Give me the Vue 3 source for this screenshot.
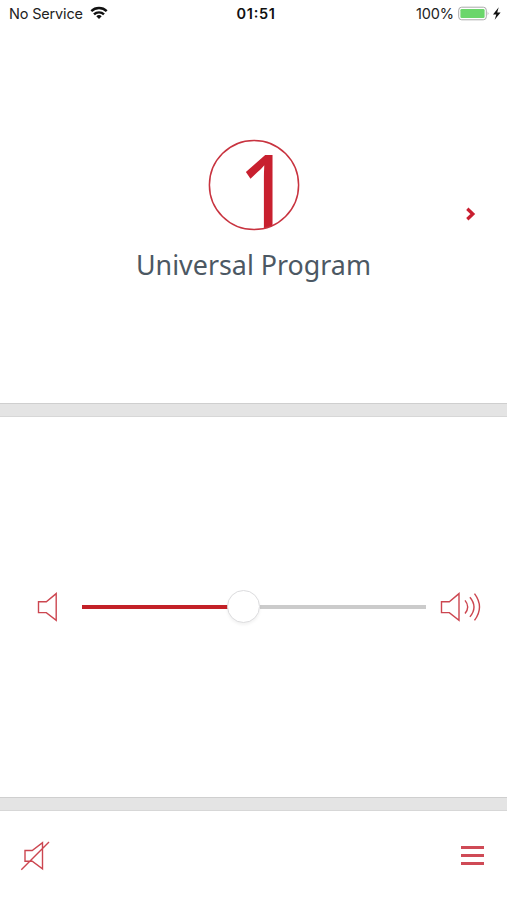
<script setup>
import { ref } from 'vue'

const program = ref({ number: '1', name: 'Universal Program' })
const volume = ref(46.8)
</script>

<template>
  <div class="screen">
    <header class="status">
      <div class="carrier">
        <svg width="75" height="20" viewBox="0 0 75 20"><text x="0" y="14.2" class="label" textLength="74">No Service</text></svg>
        <svg class="wifi" width="18" height="14" viewBox="0 0 18 14" fill="none" stroke="#111" stroke-width="2.4">
          <path d="M1.3 5.2a11 11 0 0 1 15.4 0" />
          <path d="M4 8.4a7.1 7.1 0 0 1 10 0" />
          <path d="M6.3 10.3a4 4 0 0 1 5.4 0L9 13z" fill="#111" stroke="none" />
        </svg>
      </div>
      <svg class="clock" width="39" height="20" viewBox="0 0 39 20"><text x="0.5" y="14.2" class="label bold" textLength="38.5">01:51</text></svg>
      <div class="power">
        <svg width="38" height="20" viewBox="0 0 38 20"><text x="0" y="14.2" class="label" textLength="38">100%</text></svg>
        <svg class="battery" width="44" height="16" viewBox="0 0 44 16">
          <rect x=".7" y="1.2" width="27.6" height="12.6" rx="3" fill="#fff" stroke="#aaa" />
          <rect x="2.4" y="3" width="24.2" height="9" rx="1.3" fill="#6bd66b" />
          <path d="M29.7 5.5q1.7 1.8 0 4z" fill="#aaa" />
          <path d="M40.7 1.2 35 8.5h3.3l-1.6 5.3 5.9-7.4h-3.4z" fill="#111" />
        </svg>
      </div>
    </header>

    <main class="program">
      <div class="program-main">
        <svg width="92" height="92" viewBox="0 0 92 92">
          <defs><clipPath id="disc"><circle cx="46" cy="46" r="45" /></clipPath></defs>
          <g clip-path="url(#disc)">
            <text class="numeral" transform="translate(28.9 97) scale(1 1.13)">{{ program.number }}</text>
          </g>
          <circle cx="46" cy="46" r="44.6" fill="none" stroke="#c8333f" stroke-width="1.5" />
        </svg>
        <svg class="title" width="234" height="40" viewBox="0 0 234 40">
          <text x="-1" y="29.5" textLength="235" lengthAdjust="spacingAndGlyphs">{{ program.name }}</text>
        </svg>
      </div>
      <svg class="next" width="12" height="14" viewBox="0 0 12 14" fill="none" stroke="#c91f30" stroke-width="3.3">
        <path d="m2.3 1.8 5.5 5.2-5.5 5.2" />
      </svg>
    </main>

    <div class="divider"></div>

    <section class="volume">
      <svg class="icon" width="22" height="30" viewBox="0 0 22 30"><path d="M1.5 9.7h7.8l9.9-8.1v26.7l-9.9-7.7H1.5z" /></svg>
      <div class="slider">
        <div class="fill" :style="{ width: volume + '%' }"></div>
        <div class="thumb"></div>
        <div class="rest"></div>
      </div>
      <svg class="icon loud" width="42" height="30" viewBox="0 0 42 30">
        <path d="M1.5 9.7h7.8l9.7-8.1v26.7l-9.7-7.7H1.5z" />
        <path d="M25 8.4q5.4 6.5 0 13.1M29.9 5.2q8.2 9.8 0 19.7M34.5 1.6q10 13.4 0 26.8" />
      </svg>
    </section>

    <div class="divider"></div>

    <footer class="toolbar">
      <svg class="icon" width="30" height="30" viewBox="0 0 30 30"><path d="M5 9.5h7.2l10.3-7.9v26.2l-10.3-7.6H5zM1.3 28.8 29 1" /></svg>
      <div class="menu"><i></i><i></i><i></i></div>
    </footer>
  </div>
</template>

<style>
body { background: #fff; }
</style>

<style scoped>
.screen { width: 507px; height: 900px; display: flex; flex-direction: column; background: #fff; overflow: hidden; font-family: Inter, sans-serif; }
svg { display: block; flex: none; }
.status { height: 28px; box-sizing: border-box; padding: 5px 5px 3px 9px; display: grid; grid-template-columns: 1fr 39px 1fr; }
.carrier, .power { display: flex; align-items: flex-start; }
.power { justify-content: flex-end; }
.label { font: 400 14.5px Inter, sans-serif; fill: #222; }
.bold { font-weight: 600; fill: #111; }
.wifi { margin: 1px 0 0 6px; }
.battery { margin: 1px 0 0 4px; }
.program { height: 375px; display: grid; grid-template-columns: 1fr auto; align-items: start; padding-right: 30px; box-sizing: border-box; }
.program-main { padding: 111px 0 0 30px; display: flex; flex-direction: column; align-items: center; margin-right: -12px; }
.numeral { font: 400 100px "Noto Sans", sans-serif; fill: #c8202f; }
.title { margin-top: 14px; overflow: visible; }
.title text { font: 400 28px "Noto Sans", sans-serif; fill: #4c5863; }
.next { margin-top: 179px; }
.divider { height: 14px; flex: none; box-sizing: border-box; background: #e4e4e4; border-top: 1px solid #cfcfcf; border-bottom: 1px solid #d7d7d7; }
.volume { height: 380px; padding: 0 25px 1px 37px; box-sizing: border-box; display: flex; align-items: center; }
.icon { fill: none; stroke: #cc4650; stroke-width: 1.4; }
.slider { width: 345px; margin: 0 14px 0 23px; display: flex; align-items: center; }
.fill { height: 4px; background: #c32127; margin-right: -16px; }
.thumb { width: 33px; height: 33px; flex: none; box-sizing: border-box; border: 1px solid #dcdcde; border-radius: 50%; background: #fff; box-shadow: 0 2px 3px #0000000d; position: relative; }
.rest { height: 4px; flex: 1; background: #cbcbcb; }
.toolbar { flex: 1; display: flex; justify-content: space-between; align-items: flex-start; padding: 30px 23px 0 20px; }
.menu { width: 23px; padding-top: 5px; display: grid; gap: 5px; }
.menu i { height: 3px; background: #cf4a56; }
</style>
